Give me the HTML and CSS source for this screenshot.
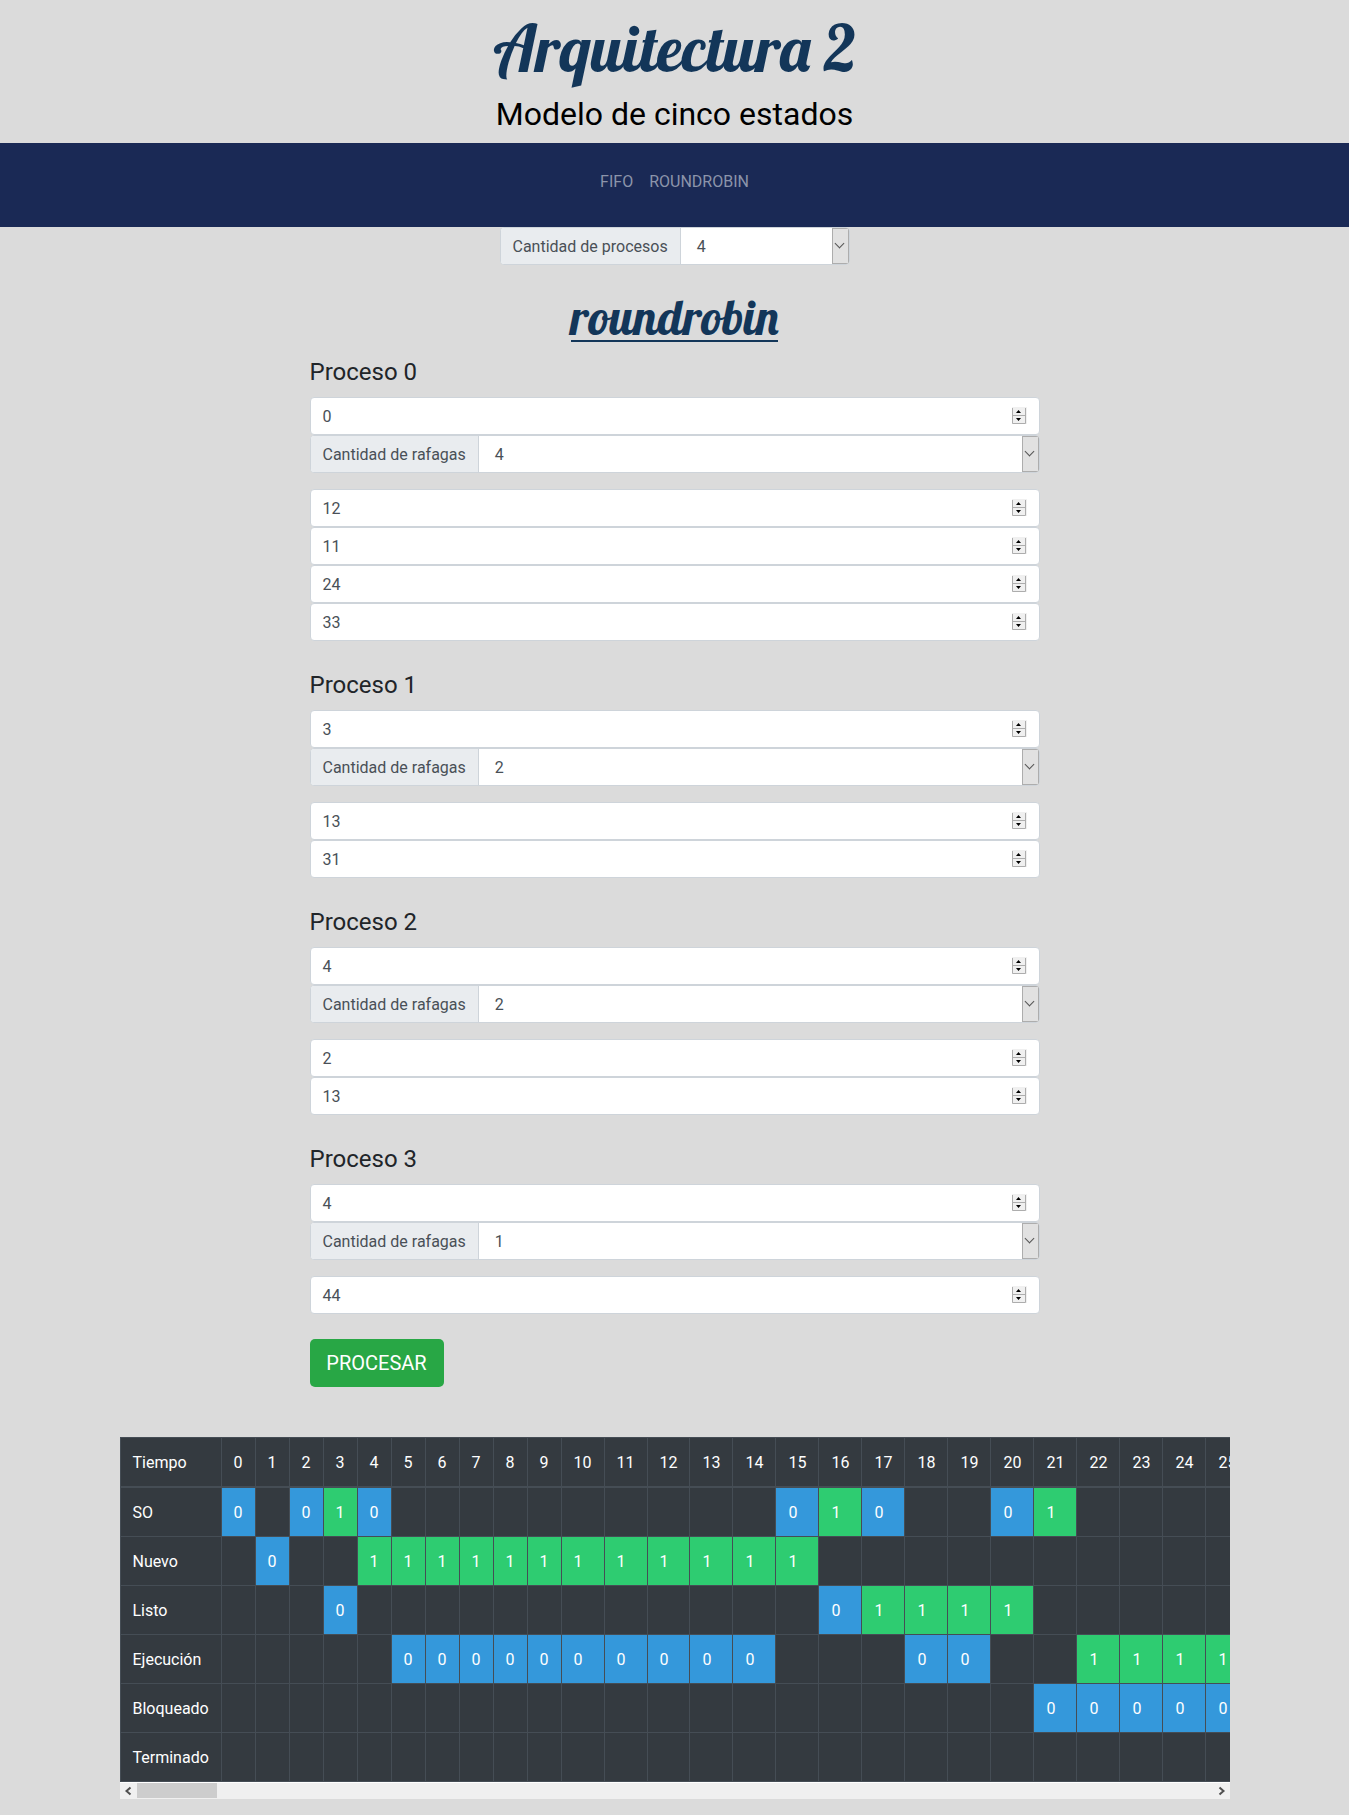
FILE: index.html
```html
<!DOCTYPE html>
<html lang="es">
<head>
<meta charset="utf-8">
<title>Arquitectura 2</title>
<link rel="stylesheet" href="styles.css">
</head>
<body>
<header>
  <h1 class="title"><span>Arquitectura 2</span></h1>
  <h2 class="subtitle">Modelo de cinco estados</h2>
</header>
<nav class="navbar"><a>FIFO</a><a>ROUNDROBIN</a></nav>
<main>
  <div class="group count"><span class="label">Cantidad de procesos</span><span class="select">4</span></div>
  <h2 class="algorithm"><span>roundrobin</span></h2>
  <div class="form" id="form"></div>
  <div class="results">
    <table id="table"></table>
    <div class="scrollbar">
      <svg width="17" height="16" viewBox="0 0 17 16"><path d="M10.500 4.500 6.500 8l4 3.500"/></svg>
      <i class="thumb"></i>
      <svg class="end" width="17" height="16" viewBox="0 0 17 16"><path d="M6.500 4.500 10.500 8l-4 3.500"/></svg>
    </div>
  </div>
</main>
<script src="app.js"></script>
</body>
</html>
```
FILE: styles.css
```css
*, *::after { box-sizing: border-box; }
body { margin: 0; height: 1815px; overflow: hidden; background: #dbdbdb; color: #212529; font: 16px/24px Roboto, sans-serif; }
h1, h2, h4 { margin: 0; font-weight: 400; }
header { height: 143px; text-align: center; color: #000; }
.title, .algorithm { font-family: Lobster, "Liberation Serif", serif; color: #133659; white-space: nowrap; text-align: center; }
.title { height: 95px; padding-top: 10px; font-size: 64px; line-height: 77px; }
.subtitle { font-size: 32px; line-height: 38px; }
.navbar { height: 84px; background: #1a2955; display: flex; justify-content: center; gap: 16px; padding-top: 27px; color: #8c94aa; }
main { display: flex; flex-direction: column; align-items: center; }
.group { position: relative; display: flex; width: 100%; height: 38px; border: 1px solid #ced4da; border-radius: 4px; background: #fff; overflow: hidden; color: #495057; }
.count { width: 350px; }
.label { padding: 7px 12px 5px; background: #e9ecef; border-right: 1px solid #ced4da; white-space: nowrap; }
.select { flex: 1; padding: 7px 16px 5px; display: flex; justify-content: space-between; }
.select::after { content: ""; width: 17px; margin: -7px -16px -5px 0; background: #e1e1e1; border: 1px solid #adadad; }
.group::after { content: ""; position: absolute; right: 5.5px; top: 12px; width: 7px; height: 7px; border: solid #555; border-width: 0 1px 1px 0; transform: rotate(45deg); }
.algorithm { height: 93px; padding-top: 22px; font-size: 48px; line-height: 60px; }
.algorithm span { display: inline-block; border-bottom: 2px solid #133659; line-height: 46px; }
.form { width: 730px; }
.form h4 { font-size: 24px; line-height: 29px; margin-bottom: 10px; }
.process { margin-bottom: 30px; }
.process:last-of-type { margin-bottom: 25px; }
.input { display: flex; align-items: center; justify-content: space-between; height: 38px; padding: 1px 12px 0; border: 1px solid #ced4da; border-radius: 4px; background: #fff; color: #495057; }
.input svg { display: block; margin-top: -2px; }
.process .group { margin-bottom: 16px; }
.button { display: block; height: 48px; width: 134px; padding: 1px 0 0; border: 0; border-radius: 5px; background: #28a745; color: #fff; font: 20px/47px Roboto, sans-serif; }
.results { width: 1110px; margin-top: 50px; overflow: hidden; }
table { table-layout: fixed; border-collapse: separate; border-spacing: 0; background: #343a40; color: #fff; border-top: 1px solid #454d55; }
td { height: 49px; padding: 1px 12px 0; border: solid #454d55; border-width: 0 1px 1px 0; white-space: nowrap; }
td:nth-child(n+15) { padding: 1px 11px 0 13px; }
tr:first-child td { height: 50px; border-bottom-width: 2px; }
td:first-child { border-left-width: 1px; }
.p0 { background: #3498db; }
.p1 { background: #2ecc71; }
.scrollbar { display: flex; height: 17px; border-top: 1px solid #fff; background: #f0f0f0; }
.scrollbar svg { fill: none; stroke: #505050; stroke-width: 2; }
.thumb { width: 80px; height: 15px; background: #cdcdcd; }
.end { margin-left: auto; }
```
FILE: app.js
```js
const spinner = '<svg width="15" height="17" viewBox="0 0 15 17"><path fill="#f0f0f0" d="M0 0h15v17H0z"/><path fill="none" stroke="#adadad" d="M.5 1v15.500h13V1M0 8.500h14"/><path d="M4 6h5L6.500 3zM4 11h5l-2.500 3z"/></svg>';
const processes = [[0, [12, 11, 24, 33]], [3, [13, 31]], [4, [2, 13]], [4, [44]]];
const input = value => `<div class="input"><span>${value}</span>${spinner}</div>`;
document.getElementById('form').innerHTML = processes.map(([start, bursts], i) =>
  `<section class="process"><h4>Proceso ${i}</h4>${input(start)}
  <div class="group"><span class="label">Cantidad de rafagas</span><span class="select">${bursts.length}</span></div>
  ${bursts.map(input).join('')}</section>`).join('') + '<button class="button">PROCESAR</button>';

// One character per time unit: the running process, or '.' when the state is empty.
const states = {
  SO: '0.010..........010..01....',
  Nuevo: '.0..111111111111..........',
  Listo: '...0............01111.....',
  'Ejecución': '.....0000000000...00..1111',
  Bloqueado: '.....................00000',
  Terminado: '..........................'
};
const times = [...Array(26).keys()];
const widths = [102, ...times.map(t => t < 10 ? 34 : t === 12 ? 42 : 43)];
document.getElementById('table').innerHTML =
  '<colgroup>' + widths.map(w => `<col style="width:${w}px">`).join('') + '</colgroup>' +
  '<tr><td>Tiempo</td>' + times.map(t => `<td>${t}</td>`).join('') + '</tr>' +
  Object.entries(states).map(([name, row]) => `<tr><td>${name}</td>` +
    [...row].map(c => c === '.' ? '<td></td>' : `<td class="p${c}">${c}</td>`).join('') + '</tr>').join('');
document.getElementById('table').style.width = widths.reduce((a, b) => a + b) + 'px';
```
